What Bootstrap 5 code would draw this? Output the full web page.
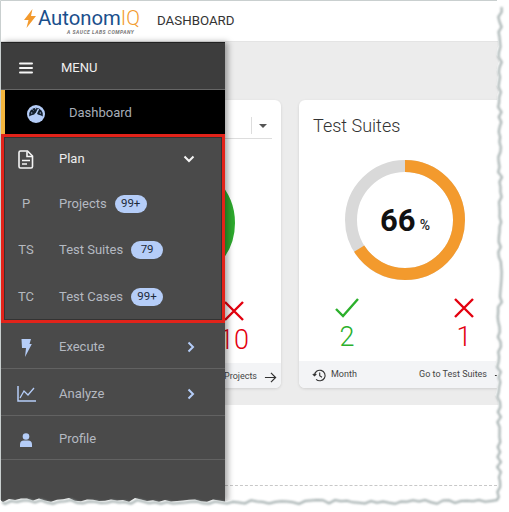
<!DOCTYPE html>
<html lang="en">
<head>
    <meta charset="UTF-8">
    <meta name="viewport" content="width=device-width, initial-scale=1.0">
    <title>AutonomIQ - Dashboard</title>
    <link href="https://cdn.jsdelivr.net/npm/bootstrap@5.3.0/dist/css/bootstrap.min.css" rel="stylesheet">
    <style>
        html, body { margin: 0; background: #fff; overflow: hidden; }
        body { font-family: Roboto, "Liberation Sans", sans-serif; }
        .shot { position: relative; width: 509px; height: 512px; overflow: hidden; background: #fff; }

        .topbar { height: 42px; padding-left: 24px; background: #fff; border-bottom: 1px solid #e4e4e4; }
        .logo-wrap { width: 133px; padding-top: 2px; }
        .logo-name { font-size: 20.3px; line-height: 21px; color: #1b4f8c; margin-left: 2px; }
        .logo-name span { color: #f39a2d; font-weight: 300; }
        .logo-sub { font-size: 5px; line-height: 6px; font-weight: 700; font-style: italic; color: #777; letter-spacing: .5px; margin: 0 0 0 43px; }
        .page-title { font-size: 13.3px; color: #333; }

        .grey-panel { background: #ececec; height: 363px; padding: 58px 0 17px 69px; gap: 18px; }
        .stat-card { flex: 0 0 212px; height: 288px; border: 0; border-radius: 6px; box-shadow: 0 1px 3px rgba(0,0,0,.12); overflow: hidden; }
        .card-head { height: 50px; padding: 12px 14px 0; font-size: 18px; font-weight: 300; color: #333; }
        .pick-line { height: 39px; margin: 0 9px 0 14px; border-bottom: 1px solid #ddd; }
        .pick-sep { width: 1px; height: 17px; background: #ddd; margin-right: 7px; margin-top: 17px; }
        .pick-caret { width: 0; height: 0; border-left: 4px solid transparent; border-right: 4px solid transparent; border-top: 4px solid #555; margin: 24px 5px 0 0; }
        .donut-box { height: 140px; }
        .donut-first { height: 160px; padding-top: 24px; }
        .tally { height: 65px; padding: 6px 17px 0 18px; }
        .tally-first { padding-top: 0; height: 64px; }
        .tally-cell { width: 60px; line-height: 1; }
        .tally-num { font-size: 27px; font-weight: 300; margin-top: 4px; }
        .tally-ok { color: #2cb02c; }
        .tally-bad { color: #e3000f; }
        .card-foot { height: 27px; padding: 1px 4px 0 13px; background: #f3f4f6; font-size: 9px; color: #444; flex-shrink: 0; margin-top: auto; }
        .foot-first { height: 25px; padding-top: 3px; }
        .foot-arrow { margin-left: 7px; }
        .donut-pct { font-size: 14px; font-weight: 500; }
        .donut-num { font-size: 31px; font-weight: 700; color: #111; line-height: 1; }
        .dash-rule { margin: 80px 12px 0 225px; border-top: 1px dashed #c8c8c8; }

        .side { position: absolute; left: 1px; top: 42px; width: 224px; height: 460px; background: #4a4a4a; border-top: 1px solid #222; box-shadow: 3px 0 6px rgba(0,0,0,.35); }
        .side-row { color: #b4b9c1; font-size: 13px; }
        .side-ico { flex: 0 0 50px; color: #b5b9bf; }
        .row-menu { height: 47px; padding-top: 3px; background: #3d3d3d; border-bottom: 1px solid #666; color: #f0f0f0; }
        .row-dash { height: 44px; padding-top: 2px; background: #000; border-left: 4px solid #f4b63f; color: #a7aeb8; }
        .row-dash .side-ico { flex-basis: 62px; }
        .row-dash .side-label { margin-left: 2px; }
        .red-box { border: 3px solid #e2231a; box-shadow: inset 0 0 0 1px #333; }
        .red-box .side-ico { flex-basis: 44px; }
        .red-box .side-label { margin-left: 11px; }
        .side-label { margin-left: 8px; }
        .row-44 { height: 44px; }
        .row-46 { height: 46px; }
        .row-47 { height: 47px; }
        .row-low { padding-top: 3px; }
        .line-below { border-bottom: 1px solid #626262; }
        .chev { margin-left: auto; margin-right: 27px; }
        .chev-side { margin-right: 30px; }
        .side-count { background: #b5cdf8; color: #1d2a3a; font-size: 11.5px; width: 32px; height: 18px; border-radius: 9px; margin-left: 8px; }
        .tear { position: absolute; left: 0; top: 0; pointer-events: none; }
    </style>
</head>
<body>
<div class="shot">
    <header class="topbar d-flex align-items-center">
        <div class="logo-wrap d-flex flex-column">
            <div class="d-flex align-items-center">
                <svg width="12" height="19" viewBox="0 0 12 19"><path d="M8.500 0 0 11H4.500L2.500 19 12 7H7z" fill="#f39a2d"/></svg>
                <span class="logo-name">Autonom<span>IQ</span></span>
            </div>
            <div class="logo-sub">A SAUCE LABS COMPANY</div>
        </div>
        <div class="page-title">DASHBOARD</div>
    </header>

    <main>
        <section class="grey-panel d-flex overflow-hidden">
            <div class="card stat-card">
                <div class="pick-line d-flex justify-content-end">
                    <div class="pick-sep"></div>
                    <div class="pick-caret"></div>
                </div>
                <div class="donut-box donut-first d-flex justify-content-center align-items-start">
                    <svg width="120" height="120" viewBox="0 0 120 120"><circle cx="60" cy="60" r="54" fill="none" stroke="#2eaa2e" stroke-width="12"/></svg>
                </div>
                <div class="tally tally-first d-flex justify-content-end">
                    <div class="tally-cell text-center">
                        <svg class="d-block mx-auto" width="24" height="24" viewBox="0 0 24 24"><path d="M3 3 21 21M21 3 3 21" stroke="#e3000f" stroke-width="2.400" fill="none"/></svg>
                        <div class="tally-num tally-bad">10</div>
                    </div>
                </div>
                <div class="card-foot foot-first d-flex align-items-center justify-content-end">
                    <span>Go to Projects</span>
                    <svg class="foot-arrow" width="13" height="13" viewBox="0 0 14 14"><path d="M1 7h11M7.500 2 12.500 7 7.500 12" stroke="#333" stroke-width="1.300" fill="none"/></svg>
                </div>
            </div>

            <div class="card stat-card">
                <div class="card-head">Test Suites</div>
                <div class="donut-box d-flex justify-content-center align-items-center position-relative">
                    <svg width="120" height="120" viewBox="0 0 120 120">
                        <circle cx="60" cy="60" r="54" fill="none" stroke="#d9d9d9" stroke-width="12"/>
                        <circle cx="60" cy="60" r="54" fill="none" stroke="#f39a2d" stroke-width="12" stroke-dasharray="224 340" transform="rotate(-90 60 60)"/>
                    </svg>
                    <div class="position-absolute d-flex align-items-end">
                        <span class="donut-num">66</span><span class="donut-pct ms-1">%</span>
                    </div>
                </div>
                <div class="tally d-flex justify-content-between">
                    <div class="tally-cell text-center">
                        <svg class="d-block mx-auto" width="26" height="24" viewBox="0 0 26 24"><path d="M2 13 9 20 24 3" stroke="#2cb02c" stroke-width="2.400" fill="none"/></svg>
                        <div class="tally-num tally-ok">2</div>
                    </div>
                    <div class="tally-cell text-center">
                        <svg class="d-block mx-auto" width="24" height="24" viewBox="0 0 24 24"><path d="M3 3 21 21M21 3 3 21" stroke="#e3000f" stroke-width="2.400" fill="none"/></svg>
                        <div class="tally-num tally-bad">1</div>
                    </div>
                </div>
                <div class="card-foot d-flex align-items-center">
                    <svg width="15" height="15" viewBox="0 0 15 15"><path d="M2.500 7.500a5.300 5.300 0 1 1 1.600 3.800M.8 6 2.500 7.800 4.300 6M7.700 4.500v3.300l2.300 1.400" stroke="#333" stroke-width="1.100" fill="none"/></svg>
                    <span class="ms-1">Month</span>
                    <span class="ms-auto">Go to Test Suites</span>
                    <svg class="foot-arrow" width="13" height="13" viewBox="0 0 14 14"><path d="M1 7h11M7.500 2 12.500 7 7.500 12" stroke="#333" stroke-width="1.300" fill="none"/></svg>
                </div>
            </div>
        </section>
        <div class="dash-rule"></div>
    </main>

    <nav class="side d-flex flex-column">
        <div class="side-row row-menu d-flex align-items-center">
            <div class="side-ico text-center">
                <svg width="14" height="12" viewBox="0 0 14 12"><path d="M1 1.500h12M1 6h12M1 10.500h12" stroke="#f5f5f5" stroke-width="2" stroke-linecap="round"/></svg>
            </div>
            <span class="side-label" style="margin-left:10px">MENU</span>
        </div>
        <div class="side-row row-dash d-flex align-items-center">
            <div class="side-ico text-center">
                <svg width="18" height="18" viewBox="0 0 18 18"><circle cx="9" cy="9" r="9" fill="#b5cdf8"/><path d="M2.200 11.500a7 7 0 1 1 13.600 0C13.500 10 11.500 9.500 9 9.500S4.500 10 2.200 11.500z" fill="#14202e"/><path d="M9 9 11.500 4" stroke="#b5cdf8" stroke-width="1.500"/><circle cx="9" cy="9.500" r="1.600" fill="#b5cdf8"/><path d="M4 8h1.300M5.500 4.500l.9.9M8.700 3v1.300M14 8h-1.300" stroke="#b5cdf8" stroke-width="1"/></svg>
            </div>
            <span class="side-label">Dashboard</span>
        </div>

        <div class="red-box">
            <div class="side-row row-44 d-flex align-items-center" style="color:#ececec">
                <div class="side-ico text-center">
                    <svg width="16" height="19" viewBox="0 0 16 19"><path d="M2.500 1h7L14.500 6v10.500a1.500 1.500 0 0 1-1.500 1.500H2.500A1.500 1.500 0 0 1 1 16.500v-14A1.500 1.500 0 0 1 2.500 1z" fill="none" stroke="#f5f5f5" stroke-width="1.600"/><path d="M9 1.500V6.500h5" fill="none" stroke="#f5f5f5" stroke-width="1.600"/><path d="M4 10.500h8M4 14h5" stroke="#f5f5f5" stroke-width="1.600"/></svg>
                </div>
                <span class="side-label">Plan</span>
                <svg class="chev" width="12" height="8" viewBox="0 0 12 8"><path d="M1.500 1.500 6 6l4.500-4.500" stroke="#f5f5f5" stroke-width="2" fill="none"/></svg>
            </div>
            <div class="side-row row-46 d-flex align-items-center">
                <div class="side-ico text-center">P</div>
                <span class="side-label">Projects</span>
                <span class="side-count d-flex align-items-center justify-content-center">99+</span>
            </div>
            <div class="side-row row-46 d-flex align-items-center">
                <div class="side-ico text-center">TS</div>
                <span class="side-label">Test Suites</span>
                <span class="side-count d-flex align-items-center justify-content-center">79</span>
            </div>
            <div class="side-row row-47 d-flex align-items-center">
                <div class="side-ico text-center">TC</div>
                <span class="side-label">Test Cases</span>
                <span class="side-count d-flex align-items-center justify-content-center">99+</span>
            </div>
        </div>

        <div class="side-row row-46 row-low line-below d-flex align-items-center">
            <div class="side-ico text-center">
                <svg width="11" height="18" viewBox="0 0 11 18"><path d="M.5 0H10L8.500 5H10.800L4 18 5 9H1z" fill="#b5cdf8"/></svg>
            </div>
            <span class="side-label">Execute</span>
            <svg class="chev chev-side" width="8" height="12" viewBox="0 0 8 12"><path d="M1.500 1.500 6 6l-4.500 4.500" stroke="#b5cdf8" stroke-width="2" fill="none"/></svg>
        </div>
        <div class="side-row row-47 row-low line-below d-flex align-items-center">
            <div class="side-ico text-center">
                <svg width="19" height="16" viewBox="0 0 19 16"><path d="M1 0v15h18" stroke="#b5cdf8" stroke-width="1.500" fill="none"/><path d="M3 12 7 5l4 4 6-7" stroke="#b5cdf8" stroke-width="1.300" fill="none"/></svg>
            </div>
            <span class="side-label">Analyze</span>
            <svg class="chev chev-side" width="8" height="12" viewBox="0 0 8 12"><path d="M1.500 1.500 6 6l-4.500 4.500" stroke="#b5cdf8" stroke-width="2" fill="none"/></svg>
        </div>
        <div class="side-row row-44 row-low line-below d-flex align-items-center">
            <div class="side-ico text-center">
                <svg width="12" height="14" viewBox="0 0 12 14"><circle cx="6" cy="3.500" r="3.300" fill="#b5cdf8"/><path d="M0 14v-2.500A4 4 0 0 1 4 7.500h4a4 4 0 0 1 4 4V14z" fill="#b5cdf8"/></svg>
            </div>
            <span class="side-label">Profile</span>
        </div>
    </nav>

    <svg class="tear" id="tear" width="509" height="512" viewBox="0 0 509 512">
        <defs><filter id="soft" x="-5%" y="-5%" width="110%" height="110%"><feGaussianBlur stdDeviation="1"/></filter></defs>
    </svg>
</div>

<script>
    // torn paper edge, jitter comes from a small seeded generator
    let seed = 17;
    function rnd() {
        seed = (seed * 9301 + 49297) % 233280;
        return seed / 233280;
    }

    let pts = [[1, 1], [497, 1]];
    for (let y = 5; y < 498; y += 5) {
        pts.push([496 + rnd() * 4 - (y > 300 ? 1 : 0), y]);
    }
    for (let x = 495; x > 1; x -= 6) {
        pts.push([x, 498 + rnd() * 4]);
    }
    pts.push([0, 500]);

    const line = pts.map(p => p[0].toFixed(1) + ',' + p[1].toFixed(1)).join(' ');
    const tear = document.getElementById('tear');
    const ns = 'http://www.w3.org/2000/svg';

    const white = document.createElementNS(ns, 'path');
    white.setAttribute('d', 'M0 0H509V512H0Z M' + line.replace(/ /g, ' L') + 'Z');
    white.setAttribute('fill', '#fff');
    white.setAttribute('fill-rule', 'evenodd');
    tear.appendChild(white);

    // grey drop shadow along right and bottom
    const shade = document.createElementNS(ns, 'polyline');
    shade.setAttribute('points', pts.slice(2).map(p => (p[0] + 2) + ',' + (p[1] + 2)).join(' '));
    shade.setAttribute('fill', 'none');
    shade.setAttribute('stroke', '#9fabab');
    shade.setAttribute('stroke-width', '2');
    shade.setAttribute('filter', 'url(#soft)');
    tear.appendChild(shade);

    // thin line on the top and left
    const edge = document.createElementNS(ns, 'path');
    edge.setAttribute('d', 'M.5 500V.5H497');
    edge.setAttribute('fill', 'none');
    edge.setAttribute('stroke', '#c9cfcf');
    tear.appendChild(edge);
</script>
<script src="https://cdn.jsdelivr.net/npm/bootstrap@5.3.0/dist/js/bootstrap.bundle.min.js"></script>
</body>
</html>
